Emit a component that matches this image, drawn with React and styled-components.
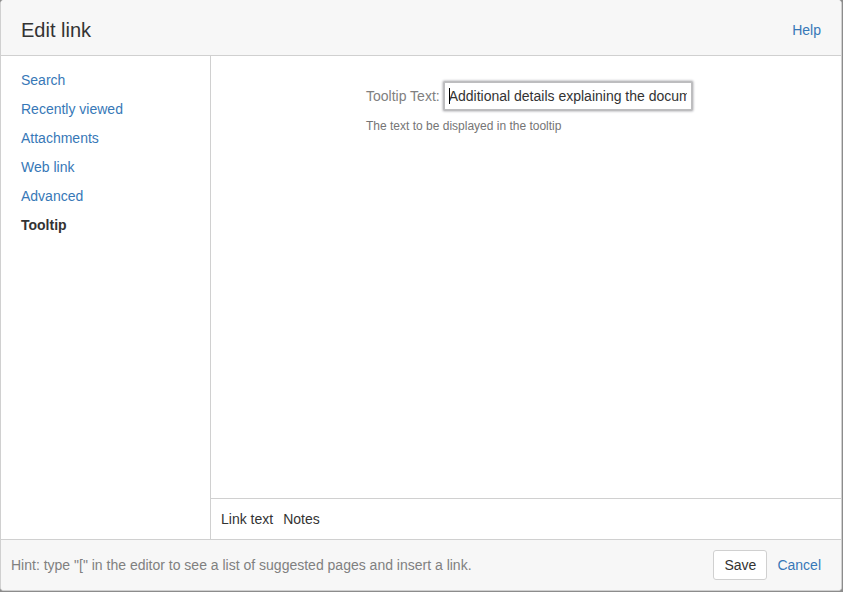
import { useState } from "react";
import styled, { createGlobalStyle } from "styled-components";

//Data
const panels = ["Search", "Recently viewed", "Attachments", "Web link", "Advanced", "Tooltip"];

export default function App() {
  const [selected, setSelected] = useState("Tooltip");
  const [tooltip, setTooltip] = useState("Additional details explaining the document");

  const handleSelect = (event, panel) => {
    event.preventDefault();
    setSelected(panel);
  };

  return (
    <>
      <GlobalStyle />
      <Backdrop>
        <Dialog role="dialog" aria-labelledby="dialog-title">
          <Header>
            <Title id="dialog-title">Edit link</Title>
            <Link href="#help">Help</Link>
          </Header>
          <Body>
            <Menu>
              {panels.map((panel) => (
                <MenuLink
                  key={panel}
                  href="#panel"
                  $selected={panel === selected}
                  onClick={(event) => handleSelect(event, panel)}
                >
                  {panel}
                </MenuLink>
              ))}
            </Menu>
            <Content>
              <Panel>
                <Field>
                  <FieldRow>
                    <Label htmlFor="tooltip-text">Tooltip Text:</Label>
                    <InputWrapper>
                      <TextInput
                        id="tooltip-text"
                        type="text"
                        value={tooltip}
                        onChange={(event) => setTooltip(event.target.value)}
                      />
                    </InputWrapper>
                  </FieldRow>
                  <Description>The text to be displayed in the tooltip</Description>
                </Field>
              </Panel>
              <LinkTextRow>
                <span>Link text</span>
                <span>Notes</span>
              </LinkTextRow>
            </Content>
          </Body>
          <Footer>
            <Hint>Hint: type "[" in the editor to see a list of suggested pages and insert a link.</Hint>
            <SaveButton type="button">Save</SaveButton>
            <Link href="#cancel">Cancel</Link>
          </Footer>
        </Dialog>
      </Backdrop>
    </>
  );
}

const GlobalStyle = createGlobalStyle`
  * {
    box-sizing: border-box;
  }
  body {
    margin: 0;
    background-color: #8c8c8c;
    color: #333333;
    font-family: "Liberation Sans", Arial, sans-serif;
    font-size: 14px;
    line-height: 20px;
  }
`;
const Backdrop = styled.div`
  display: flex;
  min-height: 100vh;
  padding: 0 1px 1px 0;
`;
const Dialog = styled.div`
  flex: 1;
  display: flex;
  flex-direction: column;
  border: 1px solid #d0d0d0;
  border-top: 0;
  border-radius: 4px;
  background-color: #ffffff;
  overflow: hidden;
`;
const Header = styled.header`
  display: flex;
  align-items: center;
  justify-content: space-between;
  height: 56px;
  padding: 4px 20px 0;
  border-bottom: 1px solid #d0d0d0;
  background-color: #f7f7f7;
`;
const Title = styled.h1`
  margin: 0;
  font-size: 20px;
  font-weight: normal;
`;
const Link = styled.a`
  color: #3778b7;
  text-decoration: none;
  &:hover {
    text-decoration: underline;
  }
`;
const Body = styled.div`
  flex: 1;
  display: flex;
`;
const Menu = styled.nav`
  display: flex;
  flex-direction: column;
  gap: 9px;
  width: 210px;
  padding: 14px 20px;
  border-right: 1px solid #d0d0d0;
`;
const MenuLink = styled(Link)`
  color: ${(props) => (props.$selected ? "#333333" : "#3778b7")};
  font-weight: ${(props) => (props.$selected ? "bold" : "normal")};
`;
const Content = styled.main`
  flex: 1;
  display: flex;
  flex-direction: column;
`;
const Panel = styled.section`
  flex: 1;
  padding: 25px 20px 20px 155px;
`;
const Field = styled.div`
  color: #757575;
`;
const FieldRow = styled.div`
  display: flex;
  align-items: center;
  gap: 3px;
`;
const Label = styled.label`
  color: #808080;
`;
const InputWrapper = styled.div`
  position: relative;
  width: 250px;
  /* text caret at the start of the field */
  &::before {
    content: "";
    position: absolute;
    top: 7px;
    left: 6px;
    width: 1px;
    height: 16px;
    background-color: #000000;
  }
`;
const TextInput = styled.input`
  display: block;
  width: 100%;
  height: 30px;
  padding: 0 4px;
  border: 2px solid #bdbdbf;
  border-radius: 2px;
  outline: 0;
  box-shadow: 0 0 2px 1px #cfcfd1;
  background-color: #ffffff;
  color: #333333;
  font-family: inherit;
  font-size: 14px;
`;
const Description = styled.div`
  margin-top: 5px;
  font-size: 12px;
`;
const LinkTextRow = styled.div`
  display: flex;
  align-items: center;
  gap: 10px;
  height: 41px;
  padding: 0 10px;
  border-top: 1px solid #d0d0d0;
`;
const Footer = styled.footer`
  display: flex;
  align-items: center;
  gap: 10px;
  height: 51px;
  padding: 0 20px 0 10px;
  border-top: 1px solid #d0d0d0;
  background-color: #f7f7f7;
`;
const Hint = styled.p`
  flex: 1;
  margin: 0;
  color: #808080;
`;
const SaveButton = styled.button`
  height: 30px;
  padding: 0 10px;
  border: 1px solid #d0d0d0;
  border-radius: 3px;
  background-color: #ffffff;
  color: #333333;
  font-family: inherit;
  font-size: 14px;
  cursor: pointer;
`;
